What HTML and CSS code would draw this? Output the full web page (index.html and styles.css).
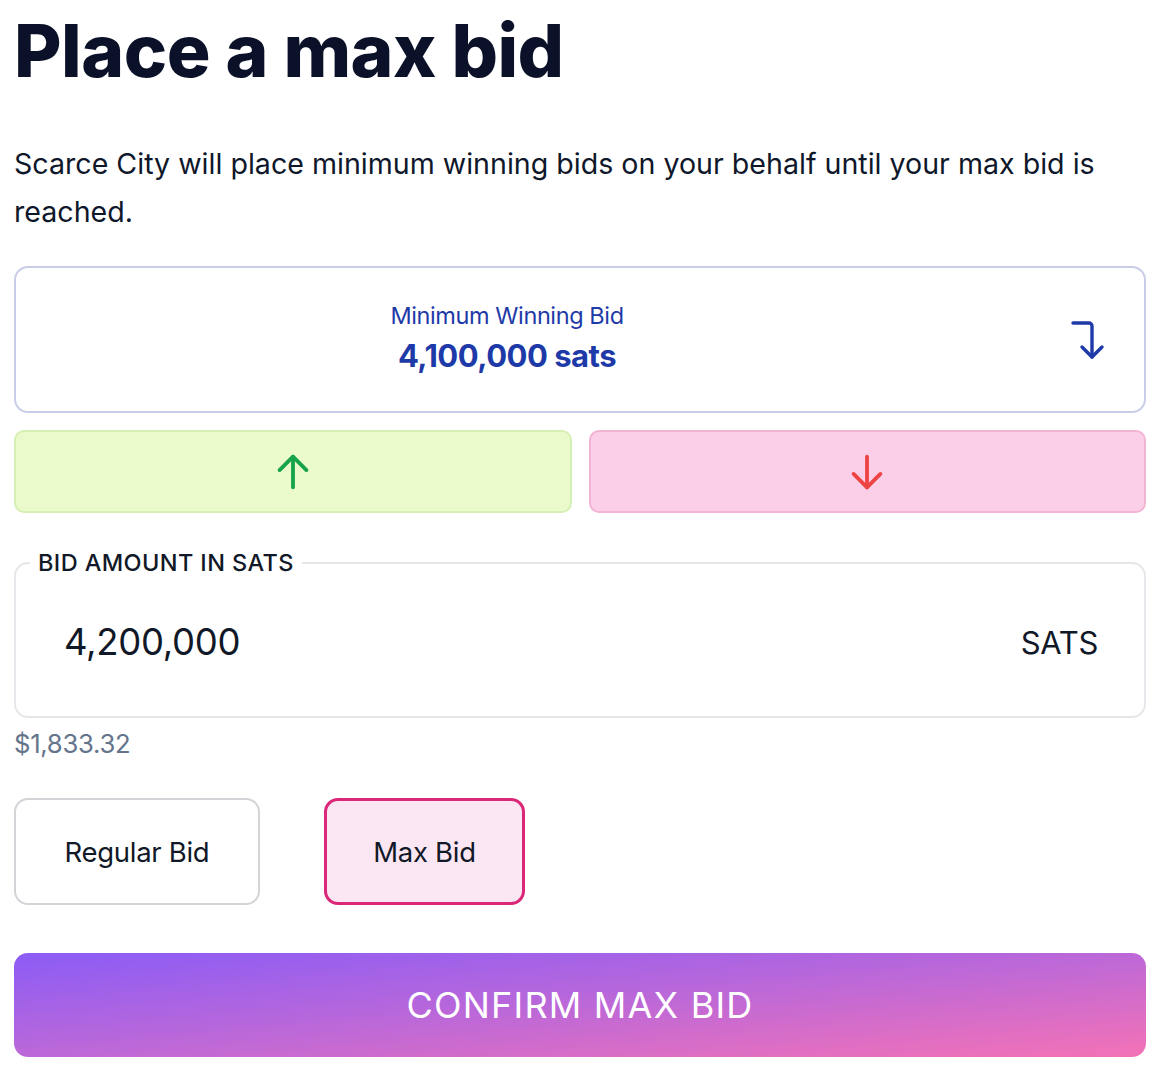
FILE: index.html
```html
<!DOCTYPE html>
<html>
<head>
<meta charset="utf-8">
<link rel="stylesheet" href="styles.css">
</head>
<body>
<main class="page">
  <h1 class="title">Place a max bid</h1>
  <p class="intro">Scarce City will place minimum winning bids on your behalf until your max bid is reached.</p>

  <div class="min-card">
    <div class="min-text">
      <div class="min-label">Minimum Winning Bid</div>
      <div class="min-value">4,100,000 sats</div>
    </div>
    <svg class="min-icon" viewBox="0 0 40 40" width="40" height="40" fill="none" stroke="currentColor" stroke-width="3.4" stroke-linecap="round" stroke-linejoin="round">
      <path d="M3 3h16a3 3 0 0 1 3 3v31"/>
      <path d="M12 27l10 10 10-10"/>
    </svg>
  </div>

  <div class="steps">
    <button class="step step-up" type="button">
      <svg viewBox="0 0 24 24" width="46" height="46" fill="none" stroke="currentColor" stroke-width="2" stroke-linecap="round" stroke-linejoin="round"><path d="M12 20V4"/><path d="M5 11l7-7 7 7"/></svg>
    </button>
    <button class="step step-down" type="button">
      <svg viewBox="0 0 24 24" width="46" height="46" fill="none" stroke="currentColor" stroke-width="2" stroke-linecap="round" stroke-linejoin="round"><path d="M12 4v16"/><path d="M5 13l7 7 7-7"/></svg>
    </button>
  </div>

  <fieldset class="amount">
    <legend class="amount-legend">BID AMOUNT IN SATS</legend>
    <div class="amount-row">
      <span class="amount-value">4,200,000</span>
      <span class="amount-unit">SATS</span>
    </div>
  </fieldset>
  <div class="usd">$1,833.32</div>

  <div class="modes">
    <button class="mode" type="button">Regular Bid</button>
    <button class="mode mode-active" type="button">Max Bid</button>
  </div>

  <button class="confirm" type="button">CONFIRM MAX BID</button>
</main>
</body>
</html>
```

FILE: styles.css
```css
* { box-sizing: border-box; }
html, body { margin: 0; padding: 0; background: #fff; }
body {
  font-family: "Inter", "Liberation Sans", sans-serif;
  color: #0f172a;
}
.page {
  padding: 0 26px 0 14px;
  display: flex;
  flex-direction: column;
}
.title {
  margin: 6px 0 0;
  font-size: 73px;
  line-height: 90px;
  font-weight: 800;
  color: #0b1128;
  letter-spacing: -0.5px;
}
.intro {
  margin: 44px 0 0;
  max-width: 1120px;
  font-size: 28.6px;
  line-height: 48px;
  color: #0f172a;
  letter-spacing: 0;
}
.min-card {
  margin-top: 30px;
  height: 147px;
  border: 2px solid #c9cde9;
  border-radius: 14px;
  display: flex;
  align-items: center;
  position: relative;
  padding: 0 146px 0 0;
}
.min-text {
  flex: 1;
  text-align: center;
  color: #1e3aa8;
}
.min-label { font-size: 23.5px; line-height: 30px; margin-top: -3px; letter-spacing: -0.4px; }
.min-value { font-size: 31px; line-height: 40px; font-weight: 700; margin-top: 5px; letter-spacing: -0.5px; }
.min-icon { color: #1e3aa8; position: absolute; right: 34px; top: 52px; }
.steps {
  margin-top: 17px;
  display: grid;
  grid-template-columns: 1fr 1fr;
  gap: 17px;
}
.step {
  height: 83px;
  border-radius: 10px;
  display: flex;
  align-items: center;
  justify-content: center;
  padding: 0;
  cursor: pointer;
}
.step-up { background: #ebfaca; border: 2px solid #d6efb4; color: #16a34a; }
.step-down { background: #facfe7; border: 2px solid #f3b4d4; color: #ef4444; }
.amount {
  margin: 35px 0 0;
  padding: 0;
  border: 2px solid #e5e7eb;
  border-radius: 14px;
  height: 170px;
  min-width: 0;
}
.amount-legend {
  padding: 0 8px;
  margin-left: 14px;
  font-size: 23.5px;
  font-weight: 500;
  letter-spacing: 0.4px;
  color: #111827;
}
.amount-row {
  display: flex;
  align-items: center;
  justify-content: space-between;
  height: 142px;
  padding: 0 46px 0 48px;
  margin-top: -6px;
}
.amount-value { font-size: 36.5px; color: #111827; letter-spacing: -0.3px; }
.amount-unit { font-size: 31px; color: #111827; letter-spacing: -0.3px; }
.usd { margin-top: 10px; font-size: 25.7px; line-height: 32px; color: #64748b; letter-spacing: -0.3px; }
.modes {
  margin-top: 38px;
  display: flex;
  gap: 64px;
}
.mode {
  height: 107px;
  border-radius: 14px;
  background: #fff;
  border: 2px solid #d4d4d8;
  font-family: inherit;
  font-size: 27.5px;
  color: #111827;
  padding: 0;
  width: 246px;
  cursor: pointer;
  letter-spacing: -0.3px;
}
.mode-active {
  width: 201px;
  background: #fbe7f3;
  border: 3px solid #db2777;
}
.confirm {
  margin-top: 48px;
  height: 104px;
  border: none;
  border-radius: 14px;
  background: linear-gradient(to bottom right, #8b5cf6 0%, #bc68d8 50%, #f472b6 100%);
  color: #fff;
  font-family: inherit;
  font-size: 36px;
  letter-spacing: 1.2px;
  cursor: pointer;
}
```
